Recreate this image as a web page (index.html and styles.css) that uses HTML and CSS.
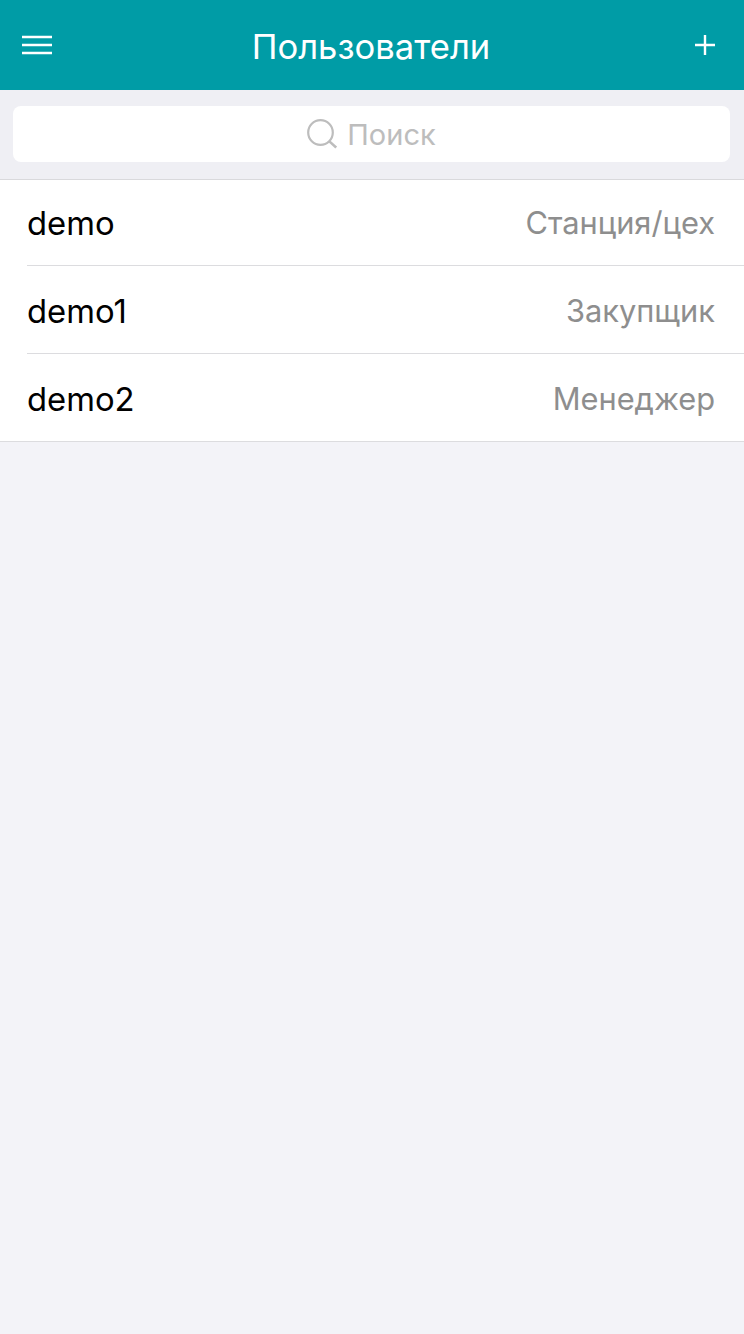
FILE: index.html
```html
<!DOCTYPE html>
<html lang="ru">
  <head>
    <meta charset="UTF-8" />
    <title>Пользователи</title>
    <link rel="stylesheet" href="styles.css">
  </head>
  <body>
    <div class="header">
      <button class="icon-btn" aria-label="Меню">
        <svg width="30" height="20" viewBox="0 0 30 20">
          <path d="M0 2h30M0 10h30M0 18h30" stroke="#fff" stroke-width="2.4" fill="none" stroke-linecap="round" />
        </svg>
      </button>
      <h1 class="header-title">Пользователи</h1>
      <button class="icon-btn" aria-label="Добавить">
        <svg width="22" height="22" viewBox="0 0 22 22">
          <path d="M11 1v20M1 11h20" stroke="#fff" stroke-width="2.4" fill="none" />
        </svg>
      </button>
    </div>

    <div class="search-bar">
      <div class="search-box">
        <svg width="30" height="30" viewBox="0 0 30 30">
          <circle cx="13.5" cy="13.5" r="12.3" stroke="#bdbdbd" stroke-width="2.2" fill="none" />
          <path d="M22.4 22.4l6.8 6.2" stroke="#bdbdbd" stroke-width="2.6" fill="none" />
        </svg>
        <span class="search-text">Поиск</span>
      </div>
    </div>

    <div class="user-list">
      <div class="user-row">
        <span class="user-name">demo</span>
        <span class="user-role">Станция/цех</span>
      </div>
      <div class="user-row">
        <span class="user-name">demo1</span>
        <span class="user-role">Закупщик</span>
      </div>
      <div class="user-row">
        <span class="user-name">demo2</span>
        <span class="user-role">Менеджер</span>
      </div>
    </div>
  </body>
</html>
```

FILE: styles.css
```css
* {
  margin: 0;
  padding: 0;
  box-sizing: border-box;
}

body {
  font-family: "Inter", "Noto Sans", sans-serif;
  background: #f3f3f8;
  min-height: 100vh;
}

.header {
  height: 90px;
  background: #009ca6;
  color: white;
  display: flex;
  align-items: center;
  justify-content: space-between;
  padding: 0 28px 0 22px;
}

.header-title {
  font-size: 34.6px;
  font-weight: 400;
  padding: 2px 4px 0 0;
}

.icon-btn {
  display: flex;
  background: none;
  border: none;
}

/* sits on top of the list, the first row slides under its bottom line */
.search-bar {
  position: relative;
  height: 90px;
  background: #efeff4;
  padding: 16px 14px 17px 13px;
  border-bottom: 1px solid #d9d9dc;
}

.search-box {
  height: 56px;
  background: white;
  border-radius: 8px;
  display: flex;
  align-items: center;
  justify-content: center;
  gap: 10px;
}

.search-text {
  font-size: 29px;
  color: #bdbdbd;
}

.user-list {
  margin-top: -2px;
  background: white;
  border-bottom: 1px solid #dcdcdf;
}

.user-row {
  height: 88px;
  margin-left: 27px;
  padding: 2px 29px 0 0;
  display: flex;
  align-items: center;
  justify-content: space-between;
  border-bottom: 1px solid #dcdcdf;
}

.user-row:last-child {
  height: 87px;
  border-bottom: none;
}

.user-name {
  font-size: 32.8px;
  color: #000;
}

.user-role {
  font-size: 30.8px;
  color: #8e8e8e;
}
```
